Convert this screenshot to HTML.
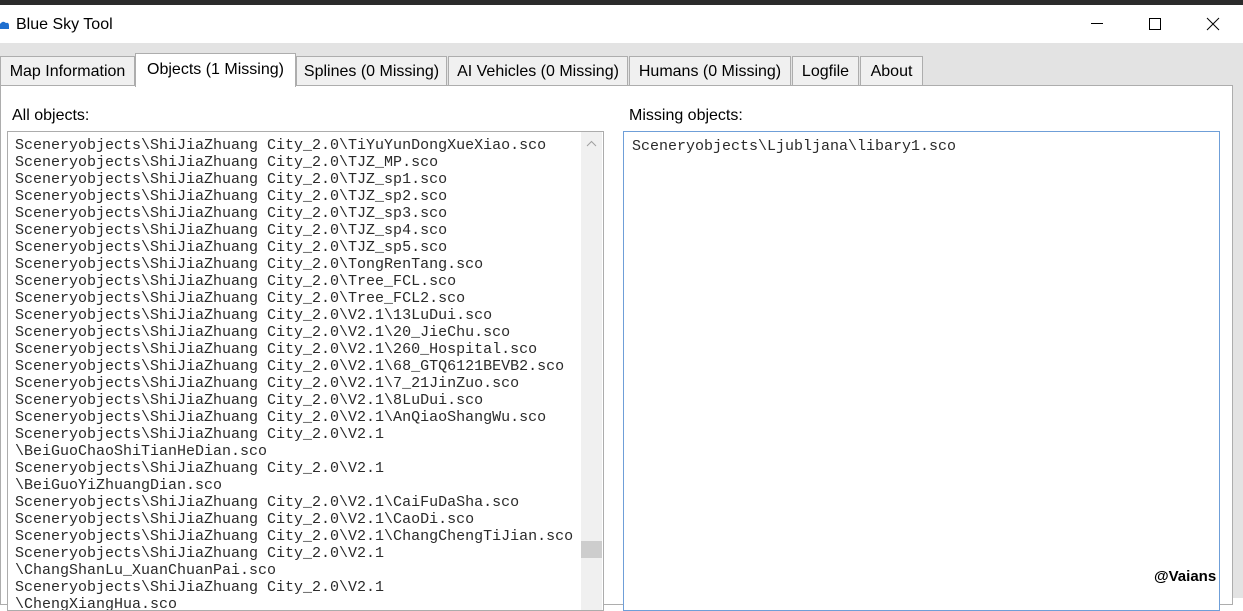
<!DOCTYPE html>
<html><head><style>
body{margin:0;width:1243px;height:598px;overflow:hidden;background:#fff;font-family:"Liberation Sans",sans-serif;position:relative}
.top{position:absolute;left:0;top:0;width:1243px;height:5px;background:#2b2b2b}
.title{position:absolute;left:16px;top:16px;font-size:16px;color:#000}
.strip{position:absolute;left:0;top:43px;width:1243px;height:555px;background:#e3e3e3}
.tab{position:absolute;top:56px;height:29px;border:1px solid #adadad;border-bottom:none;background:#f0f0f0;font-size:16px;line-height:29px;text-align:center;box-sizing:border-box;color:#000}
.sel{top:53px;height:34px;background:#fff;line-height:31px;z-index:2}
.page{position:absolute;left:0;top:85px;width:1233px;height:520px;background:#fff;border:1px solid #adadad;box-sizing:border-box}
.lbl{position:absolute;font-size:16px;top:107px}
.box{position:absolute;top:131px;height:480px;border:1px solid #acacac;box-sizing:border-box;background:#fff}
pre{margin:0;font-family:"Liberation Mono",monospace;font-size:15px;line-height:17px;color:#2a2a2a}
.sb{position:absolute;left:573px;top:0;width:21px;height:480px;background:#f0f0f0}
.thumb{position:absolute;left:0;top:409px;width:21px;height:17px;background:#cdcdcd}
</style></head><body>
<div class="top"></div>
<svg style="position:absolute;left:0;top:19px" width="10" height="12"><path d="M0 10 L0 5 Q3 1 6 4 Q9 3 9 7 L9 10 Z" fill="#1e6fd0"/></svg>
<div class="title">Blue Sky Tool</div>
<svg style="position:absolute;left:1090px;top:15px" width="140" height="20" stroke="#000" stroke-width="1" fill="none"><path d="M1 8.5H13"/><rect x="59.5" y="3.5" width="11" height="11"/><path d="M117 3L129 15M129 3L117 15"/></svg>
<div class="strip"></div>
<div class="page"></div>
<div class="tab" style="left:0;width:135px">Map Information</div>
<div class="tab sel" style="left:135px;width:161px">Objects (1 Missing)</div>
<div class="tab" style="left:296px;width:151px">Splines (0 Missing)</div>
<div class="tab" style="left:448px;width:180px">AI Vehicles (0 Missing)</div>
<div class="tab" style="left:629px;width:162px">Humans (0 Missing)</div>
<div class="tab" style="left:792px;width:67px">Logfile</div>
<div class="tab" style="left:860px;width:63px">About</div>
<div class="lbl" style="left:12px">All objects:</div>
<div class="lbl" style="left:629px">Missing objects:</div>
<div class="box" style="left:7px;width:597px;overflow:hidden">
<pre style="position:absolute;left:7px;top:5px">Sceneryobjects\ShiJiaZhuang City_2.0\TiYuYunDongXueXiao.sco
Sceneryobjects\ShiJiaZhuang City_2.0\TJZ_MP.sco
Sceneryobjects\ShiJiaZhuang City_2.0\TJZ_sp1.sco
Sceneryobjects\ShiJiaZhuang City_2.0\TJZ_sp2.sco
Sceneryobjects\ShiJiaZhuang City_2.0\TJZ_sp3.sco
Sceneryobjects\ShiJiaZhuang City_2.0\TJZ_sp4.sco
Sceneryobjects\ShiJiaZhuang City_2.0\TJZ_sp5.sco
Sceneryobjects\ShiJiaZhuang City_2.0\TongRenTang.sco
Sceneryobjects\ShiJiaZhuang City_2.0\Tree_FCL.sco
Sceneryobjects\ShiJiaZhuang City_2.0\Tree_FCL2.sco
Sceneryobjects\ShiJiaZhuang City_2.0\V2.1\13LuDui.sco
Sceneryobjects\ShiJiaZhuang City_2.0\V2.1\20_JieChu.sco
Sceneryobjects\ShiJiaZhuang City_2.0\V2.1\260_Hospital.sco
Sceneryobjects\ShiJiaZhuang City_2.0\V2.1\68_GTQ6121BEVB2.sco
Sceneryobjects\ShiJiaZhuang City_2.0\V2.1\7_21JinZuo.sco
Sceneryobjects\ShiJiaZhuang City_2.0\V2.1\8LuDui.sco
Sceneryobjects\ShiJiaZhuang City_2.0\V2.1\AnQiaoShangWu.sco
Sceneryobjects\ShiJiaZhuang City_2.0\V2.1
\BeiGuoChaoShiTianHeDian.sco
Sceneryobjects\ShiJiaZhuang City_2.0\V2.1
\BeiGuoYiZhuangDian.sco
Sceneryobjects\ShiJiaZhuang City_2.0\V2.1\CaiFuDaSha.sco
Sceneryobjects\ShiJiaZhuang City_2.0\V2.1\CaoDi.sco
Sceneryobjects\ShiJiaZhuang City_2.0\V2.1\ChangChengTiJian.sco
Sceneryobjects\ShiJiaZhuang City_2.0\V2.1
\ChangShanLu_XuanChuanPai.sco
Sceneryobjects\ShiJiaZhuang City_2.0\V2.1
\ChengXiangHua.sco</pre>
<div class="sb"><div class="thumb"></div>
<svg style="position:absolute;left:5px;top:8px" width="11" height="7"><path d="M1 6L5.5 1.5L10 6" stroke="#a0a0a0" fill="none"/></svg></div>
</div>
<div class="box" style="left:623px;width:597px;border-color:#6f9fd8">
<pre style="position:absolute;left:8px;top:6px">Sceneryobjects\Ljubljana\libary1.sco</pre>
</div>
<div style="position:absolute;left:1154px;top:568px;font:bold 15px 'Liberation Sans',sans-serif;color:#000">@Vaians</div>
</body></html>
